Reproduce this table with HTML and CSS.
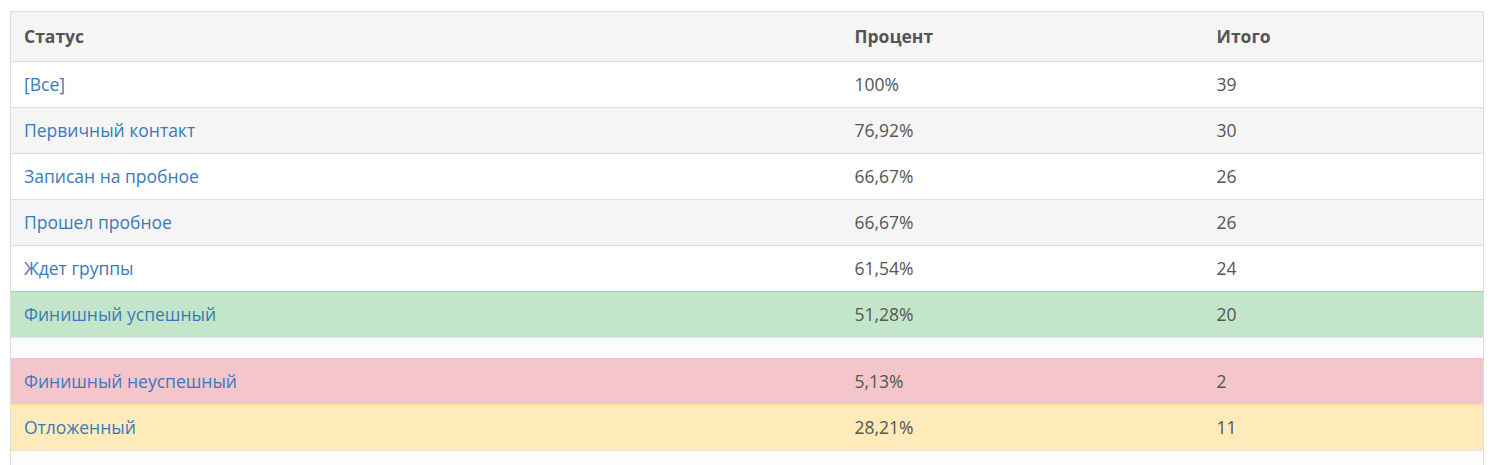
FILE: index.html
```html
<!DOCTYPE html>
<html lang="ru">
<head>
<meta charset="utf-8">
<link rel="stylesheet" href="styles.css">
</head>
<body>
<div class="wrap">
<table class="stats">
  <colgroup>
    <col class="c1"><col class="c2"><col class="c3">
  </colgroup>
  <thead>
    <tr><th>Статус</th><th>Процент</th><th>Итого</th></tr>
  </thead>
  <tbody>
    <tr><td><a href="#">[Все]</a></td><td>100%</td><td>39</td></tr>
    <tr class="odd"><td><a href="#">Первичный контакт</a></td><td>76,92%</td><td>30</td></tr>
    <tr><td><a href="#">Записан на пробное</a></td><td>66,67%</td><td>26</td></tr>
    <tr class="odd"><td><a href="#">Прошел пробное</a></td><td>66,67%</td><td>26</td></tr>
    <tr><td><a href="#">Ждет группы</a></td><td>61,54%</td><td>24</td></tr>
    <tr class="success"><td><a href="#">Финишный успешный</a></td><td>51,28%</td><td>20</td></tr>
    <tr class="gap"><td colspan="3"></td></tr>
    <tr class="danger"><td><a href="#">Финишный неуспешный</a></td><td>5,13%</td><td>2</td></tr>
    <tr class="warning"><td><a href="#">Отложенный</a></td><td>28,21%</td><td>11</td></tr>
    <tr class="tail"><td></td><td></td><td></td></tr>
  </tbody>
</table>
</div>
</body>
</html>
```

FILE: styles.css
```css
html, body {
  margin: 0;
  padding: 0;
  background: #fff;
}
body {
  font-family: "Open Sans", "Liberation Sans", sans-serif;
  font-size: 17.5px;
  color: #555;
}
.wrap {
  padding: 11px 10px 0 10px;
}
.stats {
  width: 1473px;
  border-collapse: collapse;
  border: 1px solid #ddd;
  table-layout: fixed;
}
.c1 { width: 831px; }
.c2 { width: 362px; }
.c3 { width: 280px; }
.stats th {
  background: #f5f5f5;
  text-align: left;
  font-weight: 700;
  color: #555;
  padding: 14px 13px;
  line-height: 21px;
  border-bottom: 1px solid #ddd;
}
.stats td {
  padding: 12px 13px;
  line-height: 21px;
  border-top: 1px solid #ddd;
}
.stats a {
  color: #3a7abc;
  text-decoration: none;
}
.stats tr.odd td { background: #f5f5f5; }
.stats tr.success td {
  background: #c3e5ca;
  border-top-color: #a2d2aa;
}
.stats tr.gap td {
  height: 20px;
  padding: 0;
  background: #fcfcfc;
  border-top-color: #e3e3e3;
}
.stats tr.danger td {
  background: #f4c5cb;
  border-top-color: #f4c5cb;
}
.stats tr.warning td {
  background: #feebb9;
  border-top-color: #fbdca0;
}
.stats tr.tail td {
  background: #fcfcfc;
  border-top-color: #e3e3e3;
}
```
